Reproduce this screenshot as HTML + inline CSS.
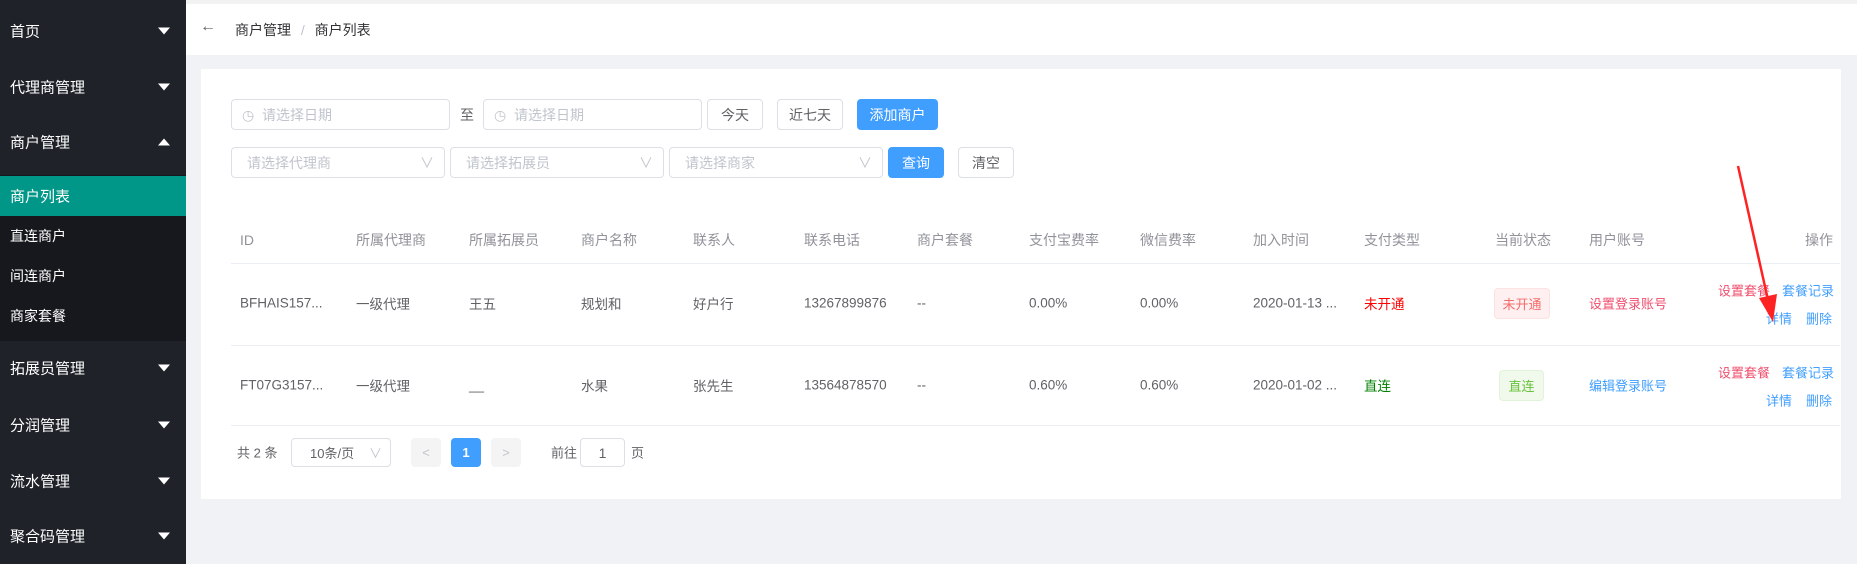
<!DOCTYPE html><html><head><meta charset="utf-8"><style>
*{margin:0;padding:0;box-sizing:border-box}
body{width:1857px;height:564px;overflow:hidden;background:#f0f2f5;font-family:"Liberation Sans","Noto Sans CJK SC",sans-serif;font-size:14px;color:#606266;position:relative}
.a{position:absolute;white-space:nowrap}
.side{position:absolute;left:0;top:0;width:186px;height:564px;background:#1f2229}
.mi{position:absolute;left:10px;color:#fff;font-size:15px;transform:translateY(-50%)}
.car{position:absolute;left:158px;width:0;height:0;border-left:6px solid transparent;border-right:6px solid transparent;border-top:7px solid #fff;transform:translateY(-50%)}
.up{border-top:none;border-bottom:7px solid #fff}
.box{position:absolute;border:1px solid #dcdfe6;border-radius:4px;background:#fff;color:#c0c4cc;font-size:14px;display:flex;align-items:center}
.btn{justify-content:center;color:#606266}
.blue{background:#409eff;border-color:#409eff;color:#fff}
.th{color:#909399;font-size:14px;transform:translateY(-50%)}
.td{transform:translateY(-50%);font-size:13.5px}
.line{position:absolute;left:231px;width:1609px;height:1px;background:#ebeef5}
.red{color:#f56c6c}.lb{color:#409eff}
.tag{position:absolute;border-radius:4px;display:flex;align-items:center;justify-content:center;font-size:13px}
</style></head><body>
<div class="side">
<div class="mi" style="top:31px">首页</div><div class="car" style="top:31px"></div>
<div class="mi" style="top:87px">代理商管理</div><div class="car" style="top:87px"></div>
<div class="mi" style="top:142px">商户管理</div><div class="car up" style="top:142px"></div>
<div style="position:absolute;top:175px;left:0;width:186px;height:166px;background:#17181d"></div>
<div style="position:absolute;top:176px;left:0;width:186px;height:40px;background:#009688"></div>
<div class="mi" style="top:196px">商户列表</div>
<div class="mi" style="top:236px;font-size:14px">直连商户</div>
<div class="mi" style="top:276px;font-size:14px">间连商户</div>
<div class="mi" style="top:316px;font-size:14px">商家套餐</div>
<div class="mi" style="top:368px">拓展员管理</div><div class="car" style="top:368px"></div>
<div class="mi" style="top:425px">分润管理</div><div class="car" style="top:425px"></div>
<div class="mi" style="top:481px">流水管理</div><div class="car" style="top:481px"></div>
<div class="mi" style="top:536px">聚合码管理</div><div class="car" style="top:536px"></div>
</div>
<div class="a" style="left:186px;top:0;width:1671px;height:55px;background:#fff;border-top:4px solid #f2f2f2"></div>
<div class="a" style="left:200px;top:18px;color:#606266;font-size:16px">←</div>
<div class="a" style="left:235px;top:20px;color:#303133">商户管理 <span style="color:#c0c4cc;margin:0 6px">/</span> 商户列表</div>
<div class="a" style="left:201px;top:69px;width:1640px;height:430px;background:#fff"></div>
<div class="box" style="left:231px;top:99px;width:219px;height:31px;padding-left:10px">◷&nbsp; 请选择日期</div>
<div class="a" style="left:460px;top:105px;color:#606266">至</div>
<div class="box" style="left:483px;top:99px;width:219px;height:31px;padding-left:10px">◷&nbsp; 请选择日期</div>
<div class="box btn" style="left:707px;top:99px;width:56px;height:31px">今天</div>
<div class="box btn" style="left:777px;top:99px;width:66px;height:31px">近七天</div>
<div class="box btn blue" style="left:857px;top:99px;width:81px;height:31px">添加商户</div>
<div class="box" style="left:231px;top:147px;width:214px;height:31px;padding-left:15px">请选择代理商<span style="position:absolute;right:10px">∨</span></div>
<div class="box" style="left:450px;top:147px;width:214px;height:31px;padding-left:15px">请选择拓展员<span style="position:absolute;right:10px">∨</span></div>
<div class="box" style="left:669px;top:147px;width:214px;height:31px;padding-left:15px">请选择商家<span style="position:absolute;right:10px">∨</span></div>
<div class="box btn blue" style="left:888px;top:147px;width:56px;height:31px">查询</div>
<div class="box btn" style="left:958px;top:147px;width:56px;height:31px">清空</div>

<div class="a th" style="left:240px;top:240px">ID</div>
<div class="a th" style="left:356px;top:240px">所属代理商</div>
<div class="a th" style="left:469px;top:240px">所属拓展员</div>
<div class="a th" style="left:581px;top:240px">商户名称</div>
<div class="a th" style="left:693px;top:240px">联系人</div>
<div class="a th" style="left:804px;top:240px">联系电话</div>
<div class="a th" style="left:917px;top:240px">商户套餐</div>
<div class="a th" style="left:1029px;top:240px">支付宝费率</div>
<div class="a th" style="left:1140px;top:240px">微信费率</div>
<div class="a th" style="left:1253px;top:240px">加入时间</div>
<div class="a th" style="left:1364px;top:240px">支付类型</div>
<div class="a th" style="left:1495px;top:240px">当前状态</div>
<div class="a th" style="left:1589px;top:240px">用户账号</div>
<div class="a th" style="left:1805px;top:240px">操作</div>
<div class="line" style="top:263px"></div>

<div class="a td" style="left:240px;top:303px">BFHAIS157...</div>
<div class="a td" style="left:356px;top:303px">一级代理</div>
<div class="a td" style="left:469px;top:303px">王五</div>
<div class="a td" style="left:581px;top:303px">规划和</div>
<div class="a td" style="left:693px;top:303px">好户行</div>
<div class="a td" style="left:804px;top:303px">13267899876</div>
<div class="a td" style="left:917px;top:303px">--</div>
<div class="a td" style="left:1029px;top:303px">0.00%</div>
<div class="a td" style="left:1140px;top:303px">0.00%</div>
<div class="a td" style="left:1253px;top:303px">2020-01-13 ...</div>
<div class="a td" style="left:1364px;top:303px;color:#f00">未开通</div>
<div class="tag" style="left:1494px;top:288px;width:56px;height:31px;background:#fef0f0;border:1px solid #fde2e2;color:#f56c6c">未开通</div>
<div class="a td" style="left:1589px;top:303px;color:#f04e6e;font-size:13px">设置登录账号</div>
<div class="a td" style="left:1718px;top:290px;color:#f04e6e;font-size:13px">设置套餐</div>
<div class="a td lb" style="left:1782px;top:290px;font-size:13px">套餐记录</div>
<div class="a td lb" style="left:1766px;top:318px;font-size:13px">详情</div>
<div class="a td lb" style="left:1806px;top:318px;font-size:13px">删除</div>
<div class="line" style="top:345px"></div>

<div class="a td" style="left:240px;top:385px">FT07G3157...</div>
<div class="a td" style="left:356px;top:385px">一级代理</div>
<div class="a td" style="left:469px;top:385px">__</div>
<div class="a td" style="left:581px;top:385px">水果</div>
<div class="a td" style="left:693px;top:385px">张先生</div>
<div class="a td" style="left:804px;top:385px">13564878570</div>
<div class="a td" style="left:917px;top:385px">--</div>
<div class="a td" style="left:1029px;top:385px">0.60%</div>
<div class="a td" style="left:1140px;top:385px">0.60%</div>
<div class="a td" style="left:1253px;top:385px">2020-01-02 ...</div>
<div class="a td" style="left:1364px;top:385px;color:#008000">直连</div>
<div class="tag" style="left:1499px;top:370px;width:45px;height:31px;background:#f0f9eb;border:1px solid #e1f3d8;color:#67c23a">直连</div>
<div class="a td lb" style="left:1589px;top:385px;font-size:13px">编辑登录账号</div>
<div class="a td" style="left:1718px;top:372px;color:#f04e6e;font-size:13px">设置套餐</div>
<div class="a td lb" style="left:1782px;top:372px;font-size:13px">套餐记录</div>
<div class="a td lb" style="left:1766px;top:400px;font-size:13px">详情</div>
<div class="a td lb" style="left:1806px;top:400px;font-size:13px">删除</div>
<div class="line" style="top:425px"></div>

<div class="a td" style="left:237px;top:452px;font-size:13px">共 2 条</div>
<div class="box" style="left:291px;top:438px;width:100px;height:29px;color:#606266;font-size:13px;padding-left:18px">10条/页<span style="position:absolute;right:8px;color:#c0c4cc">∨</span></div>
<div class="tag" style="left:411px;top:438px;width:30px;height:29px;background:#f4f4f5;color:#c0c4cc">&lt;</div>
<div class="tag" style="left:451px;top:438px;width:30px;height:29px;background:#409eff;color:#fff;font-weight:bold">1</div>
<div class="tag" style="left:491px;top:438px;width:30px;height:29px;background:#f4f4f5;color:#c0c4cc">&gt;</div>
<div class="a td" style="left:551px;top:452px;font-size:13px">前往</div>
<div class="box" style="left:580px;top:438px;width:45px;height:29px;color:#606266;justify-content:center">1</div>
<div class="a td" style="left:631px;top:452px;font-size:13px">页</div>

<svg class="a" style="left:0;top:0" width="1857" height="564"><line x1="1738" y1="166" x2="1768" y2="300" stroke="#f22" stroke-width="2.5"/><polygon points="1759,298 1777,294 1773,322" fill="#f22"/></svg>
</body></html>
